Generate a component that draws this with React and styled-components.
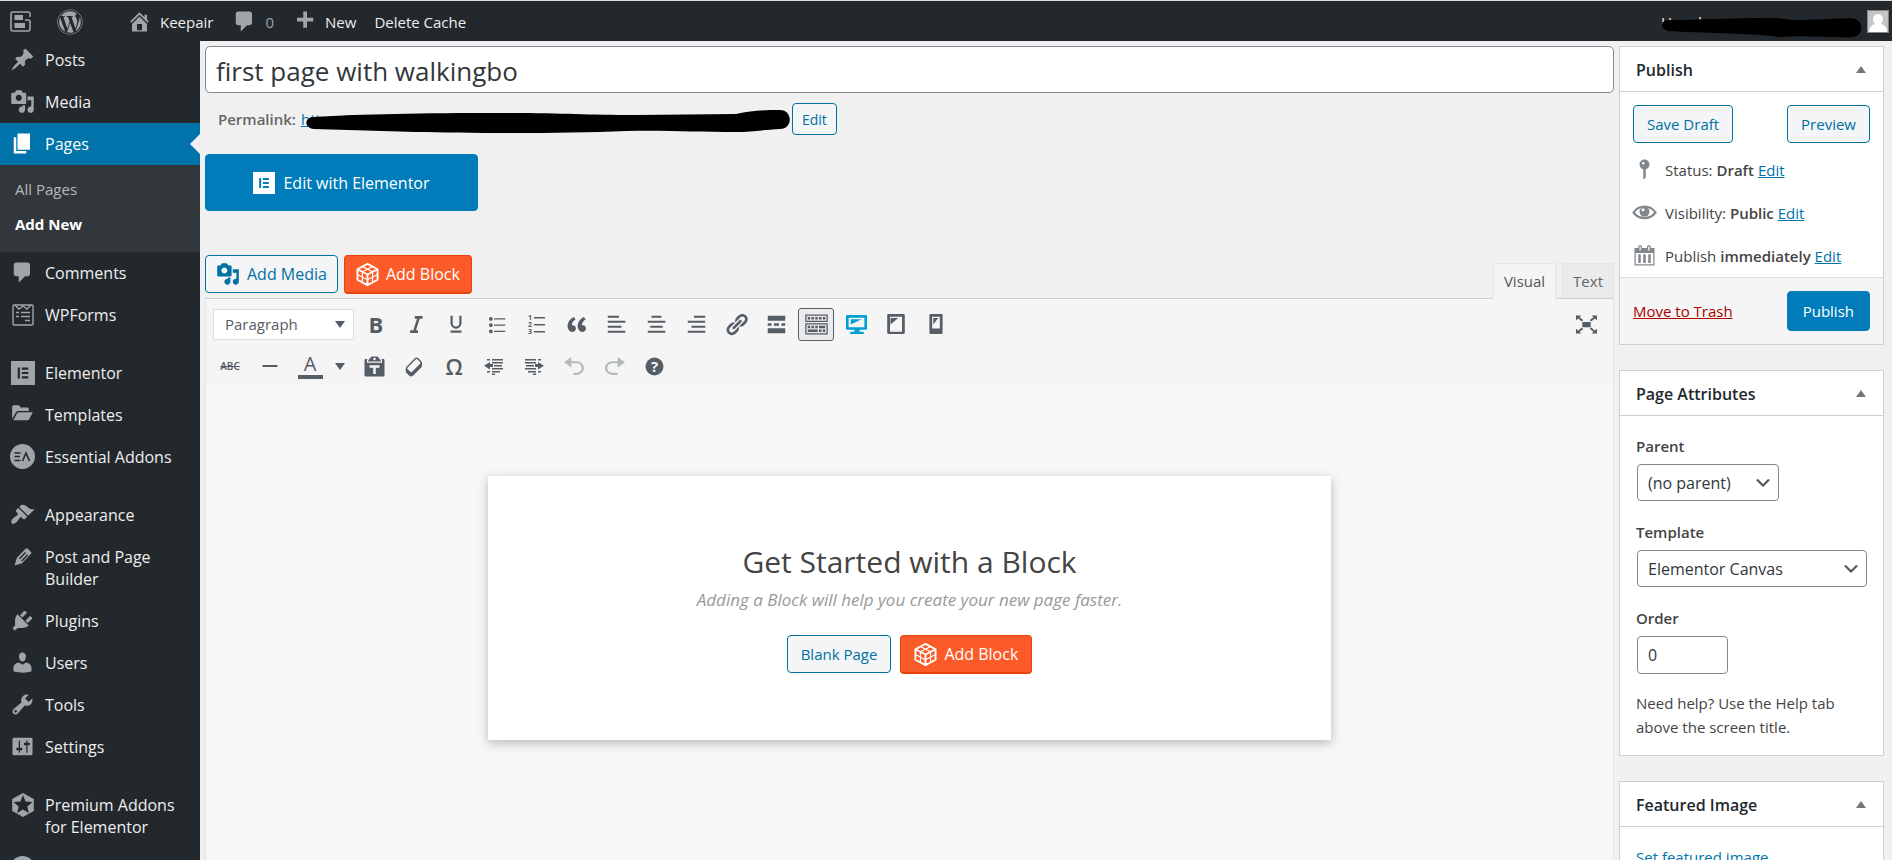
import React from "react";
import styled, { createGlobalStyle, css } from "styled-components";
import { FaWordpress } from "react-icons/fa";

const Global = createGlobalStyle`
  *, *::before, *::after { box-sizing: border-box; }
  html, body { margin: 0; height: 100%; }
  body {
    background: #f0f0f1;
    color: #444;
    font-family: "Open Sans", "Noto Sans", sans-serif;
    font-size: 15px;
    line-height: 24px;
    overflow: hidden;
  }
  button, input, select { font-family: inherit; }
`;

/* ---------- icons ---------- */

const paths = {
  pin: "M10.44 3.02l1.82-1.82 6.36 6.35-1.83 1.82c-1.05-.68-2.48-.57-3.41.36l-.75.75c-.92.93-1.04 2.35-.35 3.41l-1.83 1.82-2.41-2.41-2.8 2.79c-.42.42-3.38 2.71-3.8 2.29s1.86-3.39 2.28-3.81l2.79-2.79L4.1 9.36l1.83-1.82c1.05.69 2.48.57 3.4-.36l.75-.75c.93-.92 1.05-2.35.36-3.41z",
  media: "M13 11V4c0-.55-.45-1-1-1h-1.67L9 1H5L3.67 3H2c-.55 0-1 .45-1 1v7c0 .55.45 1 1 1h10c.55 0 1-.45 1-1zM7 4.5c1.38 0 2.5 1.12 2.5 2.5S8.38 9.5 7 9.5 4.5 8.38 4.5 7 5.62 4.5 7 4.5zM14 6h5v10.5c0 1.38-1.12 2.5-2.5 2.5S14 17.88 14 16.5s1.12-2.5 2.5-2.5c.17 0 .34.02.5.05V9h-3V6zm-4 8.05V13h2v3.5c0 1.38-1.12 2.5-2.5 2.5S7 17.88 7 16.5 8.12 14 9.5 14c.17 0 .34.02.5.05z",
  page: "M6 15V2h10v13H6zm-1 1h8v2H3V5h2v11z",
  comment: "M5 2h9c1.1 0 2 .9 2 2v7c0 1.1-.9 2-2 2h-2l-5 5v-5H5c-1.1 0-2-.9-2-2V4c0-1.1.9-2 2-2z",
  brush: "M14.48 11.06L7.41 3.99l1.5-1.5c.5-.56 2.3-.47 3.51.32 1.21.8 1.43 1.28 2.91 2.1 1.18.64 2.45 1.26 4.45.85zm-.71.71L6.7 4.7 4.93 6.47c-.39.39-.39 1.02 0 1.41l1.06 1.06c.39.39.39 1.03 0 1.42-.6.6-1.43 1.11-2.21 1.69-.35.26-.7.53-1.01.84C1.43 14.23.4 16.08 1.4 17.07c.99 1 2.84-.03 4.18-1.36.31-.31.58-.66.85-1.02.57-.78 1.08-1.61 1.69-2.21.39-.39 1.02-.39 1.41 0l1.06 1.06c.39.39 1.02.39 1.41 0z",
  plug: "M13.11 4.36L9.87 7.6 8 5.73l3.24-3.24c.35-.34 1.05-.2 1.56.32.52.51.66 1.21.31 1.55zm-8 1.77l.91-1.12 9.01 9.01-1.19.84c-.71.71-2.63 1.16-3.82 1.16H6.14L4.9 17.26c-.59.59-1.54.59-2.12 0-.59-.58-.59-1.53 0-2.12l1.24-1.24v-3.88c0-1.13.4-3.19 1.09-3.89zm7.26 3.97l3.24-3.24c.34-.35 1.04-.21 1.55.31.52.51.66 1.21.31 1.55l-3.24 3.25z",
  user: "M10 9.25c-2.27 0-2.73-3.44-2.73-3.44C7 4.02 7.82 2 9.97 2c2.16 0 2.98 2.02 2.71 3.81 0 0-.41 3.44-2.68 3.44zm0 2.57L12.72 10c2.39 0 4.52 2.33 4.52 4.53v2.49s-3.65 1.13-7.24 1.13c-3.65 0-7.24-1.13-7.24-1.13v-2.49c0-2.25 1.94-4.48 4.47-4.48z",
  wrench: "M16.68 9.77c-1.34 1.34-3.3 1.67-4.95.99l-5.41 6.52c-.99.99-2.59.99-3.58 0s-.99-2.59 0-3.57l6.52-5.42c-.68-1.65-.35-3.61.99-4.95 1.28-1.28 3.12-1.62 4.72-1.06l-2.89 2.89 2.82 2.82 2.86-2.87c.53 1.58.18 3.39-1.08 4.65zM3.81 16.21c.4.39 1.04.39 1.43 0 .4-.4.4-1.04 0-1.43-.39-.4-1.03-.4-1.43 0-.39.39-.39 1.03 0 1.43z",
  sliders: "M18 16V4c0-.55-.45-1-1-1H3c-.55 0-1 .45-1 1v12c0 .55.45 1 1 1h14c.55 0 1-.45 1-1zM8 11h1c.55 0 1 .45 1 1s-.45 1-1 1H8v1.5c0 .28-.22.5-.5.5s-.5-.22-.5-.5V13H6c-.55 0-1-.45-1-1s.45-1 1-1h1V5.5c0-.28.22-.5.5-.5s.5.22.5.5V11zm5-2h-1c-.55 0-1-.45-1-1s.45-1 1-1h1V5.5c0-.28.22-.5.5-.5s.5.22.5.5V7h1c.55 0 1 .45 1 1s-.45 1-1 1h-1v5.5c0 .28-.22.5-.5.5s-.5-.22-.5-.5V9z",
  home: "M16 8.5l1.53 1.53-1.06 1.06L10 4.6l-6.47 6.49-1.06-1.06L10 2.5l4 4v-2h2v4zm-6-2.46l6 5.99V18H4v-5.97zM12 17v-5H8v5h4z",
  plus: "M17 7v3h-5v5H9v-5H4V7h5V2h3v5h5z",
  quote: "M9.49 13.22c0-.74-.2-1.38-.61-1.9-.62-.78-1.83-.88-2.53-.72-.29-1.65 1.11-3.75 2.92-4.65L7.88 4c-2.73 1.3-5.42 4.28-4.96 8.05C3.21 14.43 4.59 16 6.54 16c.85 0 1.56-.25 2.12-.75s.83-1.18.83-2.03zm8.05 0c0-.74-.2-1.38-.61-1.9-.63-.78-1.83-.88-2.53-.72-.29-1.65 1.11-3.75 2.92-4.65L15.93 4c-2.73 1.3-5.41 4.28-4.95 8.05.29 2.38 1.66 3.95 3.61 3.95.85 0 1.56-.25 2.12-.75s.83-1.18.83-2.03z",
  bullets: "M5.5 7C4.67 7 4 6.33 4 5.5 4 4.68 4.67 4 5.5 4 6.32 4 7 4.68 7 5.5 7 6.33 6.32 7 5.5 7zM8 5h9v1H8V5zm-2.5 7c-.83 0-1.5-.67-1.5-1.5C4 9.68 4.67 9 5.5 9c.82 0 1.5.68 1.5 1.5 0 .83-.68 1.5-1.5 1.5zM8 10h9v1H8v-1zm-2.5 7c-.83 0-1.5-.67-1.5-1.5 0-.82.67-1.5 1.5-1.5.82 0 1.5.68 1.5 1.5 0 .83-.68 1.5-1.5 1.5zM8 15h9v1H8v-1z",
  alignLeft: "M12 3H3v1.6h9zM17 7H3v1.6h14zM14 11H3v1.6h11zM17 15H3v1.6h14z",
  alignCenter: "M14 3H6v1.6h8zM17 7H3v1.6h14zM15 11H5v1.6h10zM17 15H3v1.6h14z",
  alignRight: "M17 3H8v1.6h9zM17 7H3v1.6h14zM17 11H6v1.6h11zM17 15H3v1.6h14z",
  link: "M17.74 2.76c1.68 1.69 1.68 4.41 0 6.1l-1.53 1.52c-1.12 1.12-2.7 1.47-4.14 1.09l2.62-2.61.76-.77.76-.76c.84-.84.84-2.2 0-3.04-.84-.85-2.2-.85-3.04 0l-.77.76-3.38 3.38c-.37-1.44-.02-3.02 1.1-4.14l1.52-1.53c1.69-1.68 4.42-1.68 6.1 0zM8.59 13.43l5.34-5.34c.42-.42.42-1.1 0-1.52-.44-.43-1.13-.39-1.53 0l-5.33 5.34c-.42.42-.42 1.1 0 1.52.44.43 1.13.39 1.52 0zm-.76 2.29l4.14-4.15c.38 1.44.03 3.02-1.09 4.14l-1.52 1.53c-1.69 1.68-4.41 1.68-6.1 0-1.68-1.68-1.68-4.42 0-6.1l1.53-1.52c1.12-1.12 2.7-1.47 4.14-1.1l-4.14 4.15c-.85.84-.85 2.2 0 3.05.84.84 2.2.84 3.04 0z",
  more: "M17 7V3H3v4h14zM6 11V9H3v2h3zm6 0V9H8v2h4zm5 0V9h-3v2h3zm0 6v-4H3v4h14z",
  sink: "M19 2v6H1V2h18zm-1 5V3H2v4h16zM5 4v2H3V4h2zm3 0v2H6V4h2zm3 0v2H9V4h2zm3 0v2h-2V4h2zm3 0v2h-2V4h2zm2 5v9H1V9h18zm-1 8v-7H2v7h16zM5 11v2H3v-2h2zm3 0v2H6v-2h2zm3 0v2H9v-2h2zm6 0v2h-5v-2h5zm-6 3v2H3v-2h8zm3 0v2h-2v-2h2zm3 0v2h-2v-2h2z",
  desktop: "M1 1h18c.55 0 1 .45 1 1v12c0 .55-.45 1-1 1h-6v2h3c.55 0 1 .45 1 1v1H4v-1c0-.55.45-1 1-1h3v-2H1c-.55 0-1-.45-1-1V2c0-.55.45-1 1-1zm16.500 11.500v-9h-15v9h15zM4.500 5H15L4.500 10V5z",
  tablet: "M3 1h14c.55 0 1 .45 1 1v16c0 .55-.45 1-1 1H3c-.55 0-1-.45-1-1V2c0-.55.45-1 1-1zm12.500 16V3.500h-11V17h11zM5 4.500h7l-7 6v-6z",
  phone: "M5 1h10c.55 0 1 .45 1 1v16c0 .55-.45 1-1 1H5c-.55 0-1-.45-1-1V2c0-.55.45-1 1-1zm8.500 13V3.500h-7V14h7zM7.500 4.500h4.500l-4.500 6v-6z",
  expand: "M6 7.5h8v5H6zM0 1.500h5L3.400 3.100l3.500 2.700-1.300 1.300-3.500-2.700L0 6zM20 1.500h-5l1.600 1.600-3.500 2.700 1.300 1.300 3.500-2.700L20 6zM0 18.500h5l-1.600-1.600 3.500-2.700-1.300-1.300-3.500 2.700L0 14zM20 18.500h-5l1.600-1.600-3.500-2.700 1.300-1.300 3.500 2.700L20 14z",
  hr: "M2.500 9h15v2h-15z",
  paste: "M12.38 2L15 5v1H5V5l2.640-3h4.740zM10 5c.55 0 1-.44 1-1 0-.55-.45-1-1-1s-1 .45-1 1c0 .56.45 1 1 1zm5.450-1H17c.55 0 1 .45 1 1v12c0 .56-.45 1-1 1H3c-.55 0-1-.44-1-1V5c0-.55.45-1 1-1h1.550L4 4.630V7h12V4.630zM14 11V9H6v2h3v5h2v-5h3z",
  eraser: "M14.290 4.590l1.100 1.110c.41.4.61.94.61 1.470v2.120c0 .53-.2 1.070-.61 1.470l-6.630 6.630c-.4.41-.94.61-1.470.61s-1.070-.2-1.470-.61l-1.110-1.100-1.100-1.110c-.41-.4-.61-.94-.61-1.470v-2.120c0-.54.2-1.070.61-1.480l6.630-6.620c.4-.41.94-.61 1.470-.61s1.060.2 1.470.61zm-6.210 9.700l6.420-6.420c.39-.39.39-1.030 0-1.430L12.360 4.300c-.19-.19-.45-.29-.72-.29s-.52.1-.71.29l-6.420 6.420c-.39.4-.39 1.040 0 1.430l2.140 2.140c.38.38 1.040.38 1.430 0z",
  outdent: "M6 8V6L0 9.700l6 3.700V11h3V8zM3 3h3v1.400H3zM8 3h11v1.400H8zM8 6h11v1.600H8zM10 9h8v1.400h-8zM8 12h11v1.600H8zM8 15h8v1.400H8zM3 15h3v1.400H3zM8 17.500h3V19H8z",
  indent: "M14 8V6l6 3.700-6 3.700V11h-3V8zM14 3h3v1.400h-3zM1 3h11v1.400H1zM1 6h11v1.600H1zM2 9h8v1.400H2zM1 12h11v1.600H1zM4 15h8v1.400H4zM14 15h3v1.400h-3zM9 17.500h3V19H9z",
  undo: "M12 5H7V1L0 6l7 5V7h5c2.700 0 4.800 1.900 4.800 4.500S14.700 16 12 16H9v2h3c3.900 0 7-2.900 7-6.500S15.900 5 12 5z",
  redo: "M8 5h5V1l7 5-7 5V7H8c-2.700 0-4.800 1.900-4.800 4.500S5.300 16 8 16h5v2H8c-3.900 0-7-2.900-7-6.500S4.100 5 8 5z",
  status: "M14 6c0 1.860-1.280 3.410-3 3.860V16c0 1-2 2-2 2V9.860c-1.720-.45-3-2-3-3.860 0-2.210 1.790-4 4-4s4 1.790 4 4zM8 5c0 .55.45 1 1 1s1-.45 1-1-.45-1-1-1-1 .45-1 1z",
  calendar: "M15 4h3v14H2V4h3V3c0-.83.67-1.500 1.500-1.500S8 2.170 8 3v1h4V3c0-.83.67-1.500 1.500-1.500S15 2.170 15 3v1zM6 3v2.500c0 .28.22.5.5.5s.5-.22.5-.5V3c0-.28-.22-.5-.5-.5S6 2.720 6 3zm7 0v2.500c0 .28.22.5.5.5s.5-.22.5-.5V3c0-.28-.22-.5-.5-.5s-.5.22-.5.5zm4 14V8H3v9h14zM7 16V9H5v7h2zm4 0V9H9v7h2zm4 0V9h-2v7h2z",
  chevron: "M5 6l5 5 5-5 2 1-7 7-7-7 2-1z",
  elementor: "M0 0h20v20H0zM5.600 5.500v9h1.800v-9zM9 5.500v1.800h5.400V5.500zM9 9.100v1.800h5.400V9.100zM9 12.700v1.800h5.400v-1.800z",
  folder: "M1 14V3.500C1 2.500 1.700 2 2.500 2h4c.8 0 1.500.7 1.500 1.500V4h6c.8 0 1.500.6 1.500 1.500V7H6.500c-1 0-1.800.5-2.300 1.300zM2 15l3.300-6c.3-.6.8-.9 1.500-.9H19l-3.200 6c-.3.6-.8.9-1.500.9z",
  pencil: "M12.500 1.800c.7-.7 1.600-.7 2.300 0l3 3c.7.7.7 1.600 0 2.300L9 16.200 1.500 18.500 3.800 11zM6 11.200l1 1L13 6l-1-1zM8.200 13.500l1 1L15.300 8.300l-1-1z",
};

const Svg = styled.svg`
  display: block;
  flex: none;
  width: ${(p) => p.$size || 25}px;
  height: ${(p) => p.$size || 25}px;
  fill: currentColor;
  overflow: visible;
`;

const Icon = ({ name, size }) => (
  <Svg viewBox="0 0 20 20" $size={size} aria-hidden="true">
    <path d={paths[name]} fillRule="evenodd" />
  </Svg>
);

const BuilderIcon = () => (
  <Svg viewBox="0 0 21 21" $size={21} aria-hidden="true">
    <path
      d="M20 6V3a2 2 0 0 0-2-2H3a2 2 0 0 0-2 2v15a2 2 0 0 0 2 2h15a2 2 0 0 0 2-2v-7a2 2 0 0 0-2-2h-3"
      fill="none"
      stroke="currentColor"
      strokeWidth="1.600"
    />
    <path d="M4.500 4H13v5H4.500zM4.500 12H15v5H4.500z" />
  </Svg>
);

const FormsIcon = () => (
  <Svg viewBox="0 0 22 22" $size={22} aria-hidden="true">
    <g fill="none" stroke="currentColor" strokeWidth="1.400">
      <rect x="1" y="1" width="20" height="20" rx="1" />
      <path d="M3 1l4 4 4-3 4 3 4-4M4 8.500h3M9 8.500h9M4 12.500h3M9 12.500h9M13 16.500h5" />
    </g>
  </Svg>
);

const AddonsIcon = () => (
  <Svg viewBox="0 0 25 25" aria-hidden="true">
    <circle cx="12.500" cy="12.500" r="12.500" />
    <path
      d="M4.500 9h6M4.500 12.500H10M4.500 16.500h6M12.500 17l3.500-8 3.500 8"
      fill="none"
      stroke="#23282d"
      strokeWidth="1.600"
    />
  </Svg>
);

const PremiumIcon = () => (
  <Svg viewBox="0 0 22 24" $size={24} aria-hidden="true">
    <path
      fillRule="evenodd"
      d="M11 0l10.800 6v12L11 24 .2 18V6zM11 2L8.400 8.400 1.500 8.900l5.200 4.500-1.600 6.700L11 16.500l5.900 3.600-1.600-6.700 5.200-4.500-6.900-.5z"
    />
  </Svg>
);

const BlockIcon = () => (
  <Svg viewBox="0 0 24 24" $size={23} aria-hidden="true">
    <g fill="none" stroke="currentColor" strokeLinejoin="round">
      <path strokeWidth="2" d="M12 1l10.500 5.500v11L12 23 1.500 17.500v-11zM1.500 6.500L12 12l10.500-5.500M12 12v11" />
      <path
        strokeWidth="1.200"
        d="M6.700 3.700L17.300 9.200M17.300 3.700L6.700 9.200M6.700 9.200v11M17.300 9.200v11M1.500 12L12 17.500 22.500 12"
      />
    </g>
  </Svg>
);

const EyeIcon = () => (
  <Svg viewBox="0 0 25 25" aria-hidden="true">
    <path d="M1.500 12.500C7 4.500 18 4.500 23.500 12.500C18 20 7 20 1.500 12.500z" fill="none" stroke="currentColor" strokeWidth="2.200" />
    <circle cx="12.500" cy="11.800" r="5" />
    <circle cx="11" cy="9.800" r="1.500" fill="#fff" />
  </Svg>
);

const ItalicIcon = () => (
  <Svg viewBox="0 0 20 20" $size={23} aria-hidden="true">
    <path d="M8.500 3.800h6.800M4.500 16.200h6.800M12 3.800L8 16.200" fill="none" stroke="currentColor" strokeWidth="2.200" />
  </Svg>
);

const UnderlineIcon = () => (
  <Svg viewBox="0 0 20 20" $size={22} aria-hidden="true">
    <path d="M6 2.500v6.800a4 4 0 0 0 8 0V2.500M5 17h10" fill="none" stroke="currentColor" strokeWidth="2" />
  </Svg>
);

const NumbersIcon = () => (
  <Svg viewBox="0 0 25 25" aria-hidden="true">
    <path d="M10 5h11v1.500H10zM10 12h11v1.500H10zM10 19h11v1.500H10z" />
    <g fontSize="7" fontWeight="700">
      <text x="4" y="8">1</text>
      <text x="4" y="15">2</text>
      <text x="4" y="22">3</text>
    </g>
  </Svg>
);

const HelpIcon = () => (
  <Svg viewBox="0 0 25 25" aria-hidden="true">
    <circle cx="12.500" cy="12.500" r="9" />
    <text x="12.500" y="18" fontSize="15" fontWeight="700" textAnchor="middle" fill="#f5f5f5">?</text>
  </Svg>
);

const Triangle = styled.span`
  flex: none;
  width: 0;
  height: 0;
  border: 5px solid transparent;
  ${(p) =>
    p.$up
      ? css`border-top: 0; border-bottom: 7px solid #72777c;`
      : css`border-bottom: 0; border-top: 7px solid #555d66;`}
`;

/* ---------- frame ---------- */

const Screen = styled.div`
  display: flex;
  flex-direction: column;
  height: 100vh;
  overflow: hidden;
`;

const AdminBar = styled.header`
  position: relative;
  z-index: 2;
  flex: none;
  display: flex;
  align-items: center;
  height: 41px;
  padding: 0 3px 0 10px;
  border-top: 1px solid #dcdcde;
  background: #23282d;
  color: #eee;
`;

const BarItem = styled.a`
  display: flex;
  align-items: center;
  gap: ${(p) => p.$gap || 8}px;
  margin-right: ${(p) => p.$after}px;
  height: 40px;
  padding-top: 1px;
  color: ${(p) => (p.$dim ? "#9ca2a7" : "#eee")};
  text-decoration: none;
  white-space: nowrap;
  svg { color: #a0a5aa; }
`;

const Account = styled(BarItem)`
  position: relative;
  margin-left: auto;
  gap: 6px;
`;

const AccountName = styled.span`
  width: 200px;
`;

const Avatar = styled.svg`
  width: 22px;
  height: 23px;
  border: 1px solid #82878c;
  background: #c4c4c4;
`;

const Scribble = styled.svg`
  position: absolute;
  left: ${(p) => p.$left}px;
  top: ${(p) => p.$top}px;
  width: ${(p) => p.$w}px;
  height: ${(p) => p.$h}px;
`;

const Columns = styled.div`
  flex: 1;
  display: flex;
  min-height: 0;
`;

/* ---------- side menu ---------- */

const Sidebar = styled.nav`
  flex: none;
  width: 200px;
  background: #23282d;
  overflow: hidden;
`;

const Menu = styled.ul`
  list-style: none;
  margin: -2px 0 0;
  padding: 0;
`;

const MenuGap = styled.li`
  height: 16px;
`;

const MenuLink = styled.a`
  position: relative;
  display: flex;
  padding: 10px 12px 10px 0;
  line-height: 22px;
  font-size: 16px;
  text-decoration: none;
  color: ${(p) => (p.$current ? "#fff" : "#eee")};
  background: ${(p) => (p.$current ? "#0073aa" : "transparent")};
  ${(p) =>
    p.$current &&
    css`
      &::after {
        content: "";
        position: absolute;
        right: 0;
        top: 11px;
        border: 10px solid transparent;
        border-left: 0;
        border-right-color: #f0f0f1;
      }
    `}
`;

const MenuIcon = styled.span`
  flex: none;
  display: flex;
  align-items: center;
  justify-content: center;
  width: 45px;
  height: 21px;
  color: ${(p) => (p.$current ? "#fff" : "#a0a5aa")};
`;

const SubMenu = styled.ul`
  list-style: none;
  margin: 0;
  padding: 7px 0 10px 15px;
  background: #32373c;
`;

const SubLink = styled.a`
  display: block;
  height: 35px;
  line-height: 35px;
  color: ${(p) => (p.$current ? "#fff" : "#b4b9be")};
  font-weight: ${(p) => (p.$current ? 700 : 400)};
  text-decoration: none;
`;

/* ---------- content ---------- */

const Main = styled.main`
  flex: 1;
  min-width: 0;
  display: flex;
  gap: 5px;
  padding: 5px 8px 0 5px;
`;

const EditColumn = styled.div`
  flex: 1;
  min-width: 0;
  display: flex;
  flex-direction: column;
`;

const TitleInput = styled.input`
  flex: none;
  width: 100%;
  height: 47px;
  padding: 2px 10px 0;
  border: 1px solid #7e8993;
  border-radius: 5px;
  background: #fff;
  color: #32373c;
  font-size: 26px;
`;

const PermalinkRow = styled.div`
  position: relative;
  flex: none;
  display: flex;
  align-items: center;
  gap: 5px;
  height: 32px;
  margin-top: 10px;
  padding-left: 13px;
  color: #666;
`;

const PermalinkText = styled.a`
  width: 486px;
  color: #0073aa;
`;

const Strong = styled.strong`
  font-weight: 600;
`;

const Button = styled.button`
  flex: none;
  display: inline-flex;
  align-items: center;
  justify-content: center;
  gap: 7px;
  height: ${(p) => p.$h || 38}px;
  padding: 0 ${(p) => p.$pad || 13}px;
  border: 1px solid #0071a1;
  border-radius: 4px;
  background: #f3f5f6;
  color: #0071a1;
  font-size: ${(p) => p.$size || 15}px;
  white-space: nowrap;
`;

const PrimaryButton = styled(Button)`
  border-color: #007cba;
  background: #007cba;
  color: #fff;
`;

const OrangeButton = styled(Button)`
  border-color: #e8430c;
  border-bottom-width: 2px;
  background: #fb5b28;
  color: #fff;
`;

const ElementorButton = styled(PrimaryButton)`
  align-self: flex-start;
  width: 273px;
  height: 57px;
  margin-top: 19px;
  gap: 8px;
  font-size: 16px;
`;

const ToolsRow = styled.div`
  flex: none;
  display: flex;
  justify-content: space-between;
  align-items: flex-start;
  height: 43px;
  margin-top: 44px;
`;

const ButtonGroup = styled.div`
  display: flex;
  justify-content: center;
  gap: ${(p) => p.$gap || 6}px;
`;

const Tabs = styled.div`
  align-self: flex-end;
  display: flex;
  gap: 6px;
  margin-bottom: -1px;
`;

const Tab = styled.button`
  position: relative;
  height: 36px;
  padding: 0 10px;
  border: 1px solid #e5e5e5;
  border-bottom-color: ${(p) => (p.$active ? "#f5f5f5" : "#ccd0d4")};
  background: ${(p) => (p.$active ? "#f5f5f5" : "#ebebeb")};
  color: ${(p) => (p.$active ? "#555" : "#666")};
  font-size: 15px;
`;

const Editor = styled.section`
  flex: 1;
  min-height: 0;
  display: flex;
  flex-direction: column;
  border: 1px solid #e5e5e5;
  border-top-color: #ccd0d4;
  border-bottom: 0;
  background: #f7f7f7;
`;

const Toolbar = styled.div`
  display: flex;
  flex-direction: column;
  padding: 4px 7px 0 4px;
  height: 85px;
  flex: none;
  background: #f5f5f5;
  color: #555d66;
`;

const ToolLine = styled.div`
  flex: none;
  display: flex;
  align-items: center;
  height: 42px;
`;

const ToolButton = styled.button`
  flex: none;
  display: flex;
  align-items: center;
  justify-content: center;
  width: ${(p) => (p.$active ? 36 : 40)}px;
  height: 33px;
  margin: 0 ${(p) => (p.$active ? 2 : 0)}px;
  padding: 0;
  border: ${(p) => (p.$active ? "1px solid #555d66" : "0")};
  border-radius: 3px;
  background: ${(p) => (p.$active ? "#ebebeb" : "transparent")};
  color: ${(p) => p.$color || "#555d66"};
  font-size: ${(p) => p.$size || 22}px;
  font-weight: ${(p) => p.$weight || 400};
  line-height: 1;
  text-decoration: ${(p) => (p.$strike ? "line-through" : "none")};
`;

const FullscreenButton = styled(ToolButton)`
  margin-left: auto;
`;

const ColorButton = styled(ToolButton)`
  width: 64px;
  gap: 12px;
  padding-right: 2px;
`;

const ColorLetter = styled.span`
  width: 25px;
  border-bottom: 4px solid #555d66;
  font-size: 20px;
  line-height: 22px;
`;

const SelectWrap = styled.div`
  position: relative;
  display: flex;
  align-items: center;
  width: ${(p) => p.$w};
  margin: ${(p) => p.$m || "0"};
`;

const SelectMark = styled.span`
  position: absolute;
  right: ${(p) => p.$right}px;
  display: flex;
  pointer-events: none;
  color: #555;
`;

const FormatSelect = styled.select`
  appearance: none;
  width: 100%;
  height: 31px;
  padding: 0 11px;
  border: 1px solid #ddd;
  border-radius: 0;
  background: #fff;
  color: #555d66;
  font-size: 15px;
`;

const Canvas = styled.div`
  flex: 1;
  min-height: 0;
  padding: 92px 16px 0;
`;

const StartCard = styled.div`
  max-width: 843px;
  height: 264px;
  margin: 0 auto;
  padding-top: 66px;
  background: #fff;
  box-shadow: 0 3px 10px rgba(0, 0, 0, 0.25);
  text-align: center;
`;

const StartTitle = styled.h2`
  margin: 0;
  font-size: 30px;
  font-weight: 400;
  line-height: 40px;
  color: #444;
`;

const StartText = styled.p`
  margin: 6px 0 23px;
  font-size: 17px;
  font-style: italic;
  line-height: 24px;
  color: #999;
`;

/* ---------- side boxes ---------- */

const SideColumn = styled.aside`
  flex: none;
  width: 265px;
  display: flex;
  flex-direction: column;
  gap: 25px;
`;

const Box = styled.section`
  flex: none;
  border: 1px solid #ccd0d4;
  background: #fff;
`;

const BoxHead = styled.div`
  display: flex;
  align-items: center;
  justify-content: space-between;
  height: 45px;
  padding: 1px 17px 0 16px;
  border-bottom: 1px solid #ccd0d4;
`;

const BoxTitle = styled.h2`
  margin: 0;
  color: #23282d;
  font-size: 16px;
  font-weight: 600;
`;

const Actions = styled.div`
  display: flex;
  align-items: center;
  justify-content: space-between;
  padding: 13px 13px ${(p) => p.$bottom || 13}px;
`;

const StatusList = styled.ul`
  list-style: none;
  margin: 0;
  padding: 0 0 0 12px;
`;

const StatusRow = styled.li`
  display: flex;
  align-items: center;
  gap: 8px;
  height: 43px;
  color: #444;
  white-space: nowrap;
  svg { color: #82878c; }
`;

const Link = styled.a`
  color: ${(p) => (p.$danger ? "#a00" : "#0073aa")};
  text-decoration: underline;
`;

const PublishFoot = styled(Actions)`
  border-top: 1px solid #ddd;
  background: #f5f5f5;
`;

const BoxBody = styled.div`
  display: flex;
  flex-direction: column;
  padding: 18px 16px 16px;
`;

const Label = styled.label`
  height: 24px;
  margin-bottom: 6px;
  font-weight: 600;
`;

const fieldStyle = css`
  appearance: none;
  height: ${(p) => p.$h || 37}px;
  padding: 0 10px;
  border: 1px solid #7e8993;
  border-radius: 4px;
  background: #fff;
  color: #32373c;
  font-size: 16px;
`;

const Select = styled.select`
  ${fieldStyle}
  width: 100%;
`;

const OrderInput = styled.input`
  ${fieldStyle}
  width: 91px;
  margin: 0 0 17px 1px;
`;

const Note = styled.p`
  margin: 0;
`;

/* ---------- data ---------- */

const menuTop = [
  { label: "Posts", icon: <Icon name="pin" /> },
  { label: "Media", icon: <Icon name="media" /> },
  { label: "Pages", icon: <Icon name="page" />, current: true, sub: ["All Pages", "Add New"] },
  { label: "Comments", icon: <Icon name="comment" /> },
  { label: "WPForms", icon: <FormsIcon /> },
  null,
  { label: "Elementor", icon: <Icon name="elementor" size={24} /> },
  { label: "Templates", icon: <Icon name="folder" size={23} /> },
  { label: "Essential Addons", icon: <AddonsIcon /> },
  null,
  { label: "Appearance", icon: <Icon name="brush" /> },
  { label: "Post and Page Builder", icon: <Icon name="pencil" size={20} /> },
  { label: "Plugins", icon: <Icon name="plug" /> },
  { label: "Users", icon: <Icon name="user" /> },
  { label: "Tools", icon: <Icon name="wrench" /> },
  { label: "Settings", icon: <Icon name="sliders" /> },
  null,
  { label: "Premium Addons for Elementor", icon: <PremiumIcon /> },
  { label: "", icon: <AddonsIcon /> },
];

const toolsOne = [
  { label: "Bold", node: "B", weight: 700 },
  { label: "Italic", node: <ItalicIcon /> },
  { label: "Underline", node: <UnderlineIcon /> },
  { label: "Bulleted list", node: <Icon name="bullets" /> },
  { label: "Numbered list", node: <NumbersIcon /> },
  { label: "Blockquote", node: <Icon name="quote" /> },
  { label: "Align left", node: <Icon name="alignLeft" /> },
  { label: "Align center", node: <Icon name="alignCenter" /> },
  { label: "Align right", node: <Icon name="alignRight" /> },
  { label: "Insert link", node: <Icon name="link" /> },
  { label: "Read more", node: <Icon name="more" /> },
  { label: "Toolbar toggle", node: <Icon name="sink" />, active: true },
  { label: "Desktop", node: <Icon name="desktop" size={21} />, color: "#00a0d2" },
  { label: "Tablet", node: <Icon name="tablet" size={22} /> },
  { label: "Phone", node: <Icon name="phone" size={22} /> },
];

const toolsTwo = [
  { label: "Paste as text", node: <Icon name="paste" /> },
  { label: "Clear formatting", node: <Icon name="eraser" /> },
  { label: "Special character", node: "Ω", weight: 600 },
  { label: "Decrease indent", node: <Icon name="outdent" size={20} /> },
  { label: "Increase indent", node: <Icon name="indent" size={20} /> },
  { label: "Undo", node: <Icon name="undo" size={21} />, color: "#b4b9be" },
  { label: "Redo", node: <Icon name="redo" size={21} />, color: "#b4b9be" },
  { label: "Help", node: <HelpIcon /> },
];

const Tool = ({ item }) => (
  <ToolButton
    type="button"
    aria-label={item.label}
    $active={item.active}
    $color={item.color}
    $weight={item.weight}
  >
    {item.node}
  </ToolButton>
);

const SideBox = ({ title, children }) => (
  <Box>
    <BoxHead>
      <BoxTitle>{title}</BoxTitle>
      <Triangle $up />
    </BoxHead>
    {children}
  </Box>
);

export default function App() {
  return (
    <Screen>
      <Global />
      <AdminBar>
        <BarItem href="#builder" aria-label="Builder" $after={26}><BuilderIcon /></BarItem>
        <BarItem href="#wp" aria-label="WordPress" $after={44}><FaWordpress size={26} /></BarItem>
        <BarItem href="#site" $after={19}><Icon name="home" />Keepair</BarItem>
        <BarItem href="#comments" $after={18} $dim><Icon name="comment" />0</BarItem>
        <BarItem href="#new" $after={18}><Icon name="plus" />New</BarItem>
        <BarItem href="#cache" $after={0}>Delete Cache</BarItem>
        <Account href="#profile">
          <AccountName>Howdy,</AccountName>
          <Scribble $left={0} $top={16} $w={202} $h={22} viewBox="0 0 202 22" aria-hidden="true">
            <path d="M7 3C40 3 70 1 100 1C120 0 125 3 140 3L190 1C203 2 204 18 192 20C170 21 150 18 120 20C85 16 40 16 8 14C-2 12-1 4 7 3z" />
          </Scribble>
          <Avatar viewBox="0 0 20 21" aria-hidden="true">
            <path fill="#fff" d="M10 3a5 5 0 0 1 5 5c0 2-1 4-2 5 4 1 6 4 6 8H1c0-4 2-7 6-8-1-1-2-3-2-5a5 5 0 0 1 5-5z" />
          </Avatar>
        </Account>
      </AdminBar>

      <Columns>
        <Sidebar>
          <Menu>
            {menuTop.map((item, i) =>
              item ? (
                <li key={i}>
                  <MenuLink href="#menu" $current={item.current}>
                    <MenuIcon $current={item.current}>{item.icon}</MenuIcon>
                    {item.label}
                  </MenuLink>
                  {item.sub && (
                    <SubMenu>
                      {item.sub.map((s) => (
                        <li key={s}><SubLink href="#sub" $current={s === "Add New"}>{s}</SubLink></li>
                      ))}
                    </SubMenu>
                  )}
                </li>
              ) : (
                <MenuGap key={i} />
              )
            )}
          </Menu>
        </Sidebar>

        <Main>
          <EditColumn>
            <TitleInput aria-label="Title" defaultValue="first page with walkingbo" />
            <PermalinkRow>
              <Strong>Permalink:</Strong>
              <PermalinkText href="#permalink">https://</PermalinkText>
              <Scribble $left={101} $top={7} $w={484} $h={23} viewBox="0 0 484 23" aria-hidden="true">
                <path d="M7 7C60 4 110 3 200 3C260 3 280 5 330 5L430 4C445 1 455 0 474 0C487 0 487 19 474 19C455 20 445 22 430 22C390 22 360 20 320 21C250 24 160 23 110 22L8 19C-2 18-2 8 7 7z" />
              </Scribble>
              <Button type="button" $h={32} $pad={9} $size={14}>Edit</Button>
            </PermalinkRow>
            <ElementorButton type="button"><Icon name="elementor" size={22} />Edit with Elementor</ElementorButton>

            <ToolsRow>
              <ButtonGroup>
                <Button type="button" $pad={10} $size={16}><Icon name="media" size={24} />Add Media</Button>
                <OrangeButton type="button" $h={39} $pad={11} $size={16}><BlockIcon />Add Block</OrangeButton>
              </ButtonGroup>
              <Tabs>
                <Tab type="button" $active>Visual</Tab>
                <Tab type="button">Text</Tab>
              </Tabs>
            </ToolsRow>

            <Editor>
              <Toolbar>
                <ToolLine>
                  <SelectWrap $w="141px" $m="0 2px 0 3px">
                    <FormatSelect aria-label="Format"><option>Paragraph</option></FormatSelect>
                    <SelectMark $right={9}><Triangle /></SelectMark>
                  </SelectWrap>
                  {toolsOne.map((t) => <Tool key={t.label} item={t} />)}
                  <FullscreenButton type="button" aria-label="Fullscreen"><Icon name="expand" size={21} /></FullscreenButton>
                </ToolLine>
                <ToolLine>
                  <ToolButton type="button" $size={10} $weight={600} $strike>ABC</ToolButton>
                  <ToolButton type="button" aria-label="Horizontal line"><Icon name="hr" size={20} /></ToolButton>
                  <ColorButton type="button" aria-label="Text color"><ColorLetter>A</ColorLetter><Triangle /></ColorButton>
                  {toolsTwo.map((t) => <Tool key={t.label} item={t} />)}
                </ToolLine>
              </Toolbar>
              <Canvas>
                <StartCard>
                  <StartTitle>Get Started with a Block</StartTitle>
                  <StartText>Adding a Block will help you create your new page faster.</StartText>
                  <ButtonGroup $gap={9}>
                    <Button type="button">Blank Page</Button>
                    <OrangeButton type="button" $h={39} $size={16}><BlockIcon />Add Block</OrangeButton>
                  </ButtonGroup>
                </StartCard>
              </Canvas>
            </Editor>
          </EditColumn>

          <SideColumn>
            <SideBox title="Publish">
              <Actions $bottom={5}>
                <Button type="button">Save Draft</Button>
                <Button type="button">Preview</Button>
              </Actions>
              <StatusList>
                <StatusRow><Icon name="status" /><span>Status: <Strong>Draft</Strong> <Link href="#status">Edit</Link></span></StatusRow>
                <StatusRow><EyeIcon /><span>Visibility: <Strong>Public</Strong> <Link href="#visibility">Edit</Link></span></StatusRow>
                <StatusRow><Icon name="calendar" /><span>Publish <Strong>immediately</Strong> <Link href="#date">Edit</Link></span></StatusRow>
              </StatusList>
              <PublishFoot>
                <Link href="#trash" $danger>Move to Trash</Link>
                <PrimaryButton type="button" $h={40} $pad={15}>Publish</PrimaryButton>
              </PublishFoot>
            </SideBox>

            <SideBox title="Page Attributes">
              <BoxBody>
                <Label htmlFor="parent">Parent</Label>
                <SelectWrap $w="142px" $m="0 0 19px 1px">
                  <Select id="parent"><option>(no parent)</option></Select>
                  <SelectMark $right={6}><Icon name="chevron" size={20} /></SelectMark>
                </SelectWrap>
                <Label htmlFor="template">Template</Label>
                <SelectWrap $w="230px" $m="0 0 19px 1px">
                  <Select id="template"><option>Elementor Canvas</option></Select>
                  <SelectMark $right={6}><Icon name="chevron" size={20} /></SelectMark>
                </SelectWrap>
                <Label htmlFor="order">Order</Label>
                <OrderInput id="order" $h={38} defaultValue="0" />
                <Note>Need help? Use the Help tab above the screen title.</Note>
              </BoxBody>
            </SideBox>

            <SideBox title="Featured Image">
              <BoxBody><Link href="#featured">Set featured image</Link></BoxBody>
            </SideBox>
          </SideColumn>
        </Main>
      </Columns>
    </Screen>
  );
}
